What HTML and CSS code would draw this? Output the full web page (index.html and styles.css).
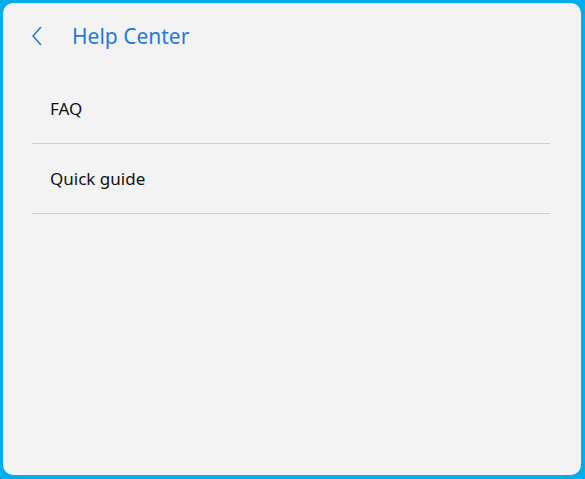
FILE: index.html
```html
<html><head>
<title>Help Center</title>
<link rel="stylesheet" href="styles.css">
</head><body>

<div class="panel">
  <div class="header">
    <svg class="back" width="12" height="20" viewBox="0 0 12 20">
      <path d="M9.5 1.5 L2 10 L9.5 18.5" fill="none" stroke="#1f7ae0" stroke-width="1.6" stroke-linecap="round" stroke-linejoin="round"/>
    </svg>
    <span class="title">Help Center</span>
  </div>
  <div class="list">
    <div class="item">FAQ</div>
    <div class="item">Quick guide</div>
  </div>
</div>

</body></html>
```
FILE: styles.css
```css
html, body {
  margin:0;
  height:100%;
  background-color:#00adef;
}
body {
  padding:3px 4px 4px 3px;
  box-sizing:border-box;
  font-family:"Noto Sans", "Open Sans", sans-serif;
}
div.panel {
  height:100%;
  background-color:#f3f3f3;
  border-radius:10px;
}
div.header {
  display:flex;
  align-items:center;
  padding-top:22px;
  padding-left:28px;
  height:22px;
}
svg.back {
  margin-right:29px;
}
span.title {
  color:#1f7ae0;
  font-size:21px;
}
div.list {
  margin-top:27px;
  margin-left:29px;
  margin-right:31px;
}
div.item {
  height:70px;
  box-sizing:border-box;
  padding-left:18px;
  line-height:69px;
  font-size:17px;
  color:#111111;
  border-bottom:1px solid #cfcfcf;
}
```
